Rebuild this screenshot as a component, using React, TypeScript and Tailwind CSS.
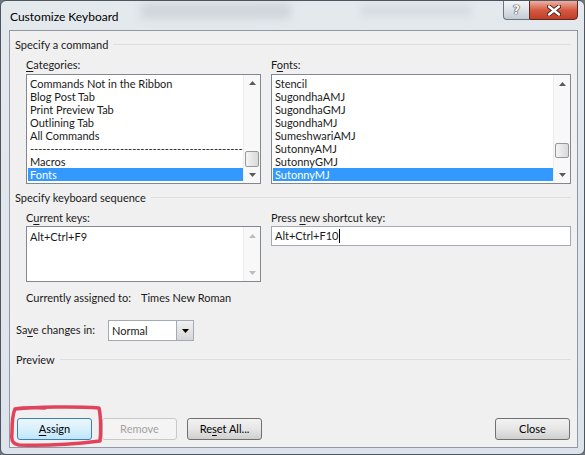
import React from 'react';

const CATEGORIES = [
  'Commands Not in the Ribbon',
  'Blog Post Tab',
  'Print Preview Tab',
  'Outlining Tab',
  'All Commands',
  '-------------------------------------------------------',
  'Macros',
  'Fonts',
];

const FONTS = [
  'Stencil',
  'SugondhaAMJ',
  'SugondhaGMJ',
  'SugondhaMJ',
  'SumeshwariAMJ',
  'SutonnyAMJ',
  'SutonnyGMJ',
  'SutonnyMJ',
];

function Tri({ dir, color }: { dir: 'up' | 'down'; color: string }) {
  return (
    <svg width="7" height="4" viewBox="0 0 7 4">
      <path d={dir === 'up' ? 'M0 4 L3.5 0 L7 4 Z' : 'M0 0 L7 0 L3.5 4 Z'} fill={color} />
    </svg>
  );
}

function ScrollBar({ thumb, disabled }: { thumb?: string; disabled?: boolean }) {
  const c = disabled ? '#bcbcbc' : '#5a5a5a';
  return (
    <div className="w-[17px] shrink-0 flex flex-col bg-[#f8f8f8] border-l border-[#ededed]">
      <div className="h-[17px] flex items-center justify-center">
        <Tri dir="up" color={c} />
      </div>
      <div className="flex-1">
        {thumb && (
          <div
            className={`${thumb} mx-[1px] rounded-[2px] border border-[#979797] bg-gradient-to-r from-[#f4f4f4] to-[#d9d9d9]`}
          />
        )}
      </div>
      <div className="h-[17px] flex items-center justify-center">
        <Tri dir="down" color={c} />
      </div>
    </div>
  );
}

function ListBox({ items, width, thumb }: { items: string[]; width: string; thumb: string }) {
  return (
    <div className={`${width} h-[110px] flex border border-[#828790] bg-white`}>
      <ul className="flex-1 min-w-0 pt-[2px] pl-[1px]">
        {items.map((t, i) => (
          <li
            key={i}
            className={`h-[13px] leading-[13px] pl-[2px] whitespace-nowrap ${
              i === items.length - 1 ? 'bg-[#3399ff] text-white' : ''
            }`}
          >
            {t}
          </li>
        ))}
      </ul>
      <ScrollBar thumb={thumb} />
    </div>
  );
}

function GroupHeader({ title, className = '' }: { title: string; className?: string }) {
  return (
    <div className={`h-[15px] leading-[15px] flex items-center ${className}`}>
      <span>{title}</span>
      <div className="flex-1 ml-[5px] mr-[1px] border-t border-[#dadfe3]" />
    </div>
  );
}

function WinButton({
  children,
  variant = 'normal',
  className = '',
}: {
  children: React.ReactNode;
  variant?: 'normal' | 'default' | 'disabled';
  className?: string;
}) {
  const styles = {
    normal: 'border-[#707070] bg-gradient-to-b from-[#f2f2f2] via-[#e6e6e6] to-[#cfcfcf] text-black',
    default: 'border-[#3c7fb1] bg-gradient-to-b from-[#eaf6fd] via-[#d9f0fc] to-[#bee6fd] text-black',
    disabled: 'border-[#c9c9c9] bg-[#f4f4f4] text-[#a3a3a3]',
  }[variant];
  return (
    <button
      className={`w-[75px] h-[22px] rounded-[3px] border flex items-center justify-center ${styles} ${className}`}
    >
      {children}
    </button>
  );
}

export default function App() {
  return (
    <div className="w-[585px] h-[455px] bg-[#6f757c] font-['Segoe_UI','Lato',sans-serif] text-[11px] text-[#1a1a1a]">
      <div className="relative h-full flex flex-col rounded-[6px] border border-[#4c5560] bg-gradient-to-b from-[#e4e9ee] to-[#dde3ea] pl-[8px] pr-[6px] pb-[6px] overflow-hidden">
        {/* blurred glass behind title bar */}
        <div className="absolute left-[140px] top-[2px] w-[150px] h-[16px] rounded-[3px] bg-[#c9ced4] blur-[4px] opacity-70" />
        <div className="absolute left-[360px] top-[5px] w-[110px] h-[10px] bg-[#cfd4da] blur-[4px] opacity-70" />

        {/* Title bar */}
        <div className="relative h-[29px] flex items-start">
          <span className="mt-[7px] ml-[1px] text-[12px] text-black">Customize Keyboard</span>
          <div className="ml-auto -mt-px flex">
            <div className="w-[26px] h-[20px] rounded-bl-[4px] border border-[#6d7680] border-r-0 bg-gradient-to-b from-[#f3f5f7] via-[#dde2e7] to-[#c4cbd3] flex items-center justify-center">
              <span className="font-['DejaVu_Sans',sans-serif] font-bold text-[12px] text-white [text-shadow:0_0_1px_#333,0_0_1px_#333,0_0_1px_#333]">
                ?
              </span>
            </div>
            <div className="w-[49px] h-[20px] rounded-br-[4px] border border-[#5a2b25] bg-gradient-to-b from-[#eab0a3] via-[#d45a41] to-[#c03d25] flex items-center justify-center">
              <svg width="14" height="11" viewBox="0 0 14 11">
                <path d="M2 1.5 L12 9.5 M12 1.5 L2 9.5" stroke="#4a1e18" strokeWidth="4.2" strokeLinecap="round" />
                <path d="M2 1.5 L12 9.5 M12 1.5 L2 9.5" stroke="#ffffff" strokeWidth="2.4" strokeLinecap="round" />
              </svg>
            </div>
          </div>
        </div>

        {/* Client area */}
        <div className="flex-1 flex flex-col border border-[#8f98a3] bg-[#f0f0f0] px-[5px] pt-[6px] pb-[7px]">
          <GroupHeader title="Specify a command" />

          <div className="flex mt-[5px] ml-[11px]">
            <div className="w-[245px] h-[15px] leading-[15px]">
              <span className="underline underline-offset-2">C</span>ategories:
            </div>
            <div className="h-[15px] leading-[15px]">
              F<span className="underline underline-offset-2">o</span>nts:
            </div>
          </div>
          <div className="flex mt-[2px] ml-[11px]">
            <ListBox items={CATEGORIES} width="w-[235px]" thumb="mt-[59px] h-[16px]" />
            <div className="w-[10px]" />
            <ListBox items={FONTS} width="w-[300px]" thumb="mt-[51px] h-[15px]" />
          </div>

          <GroupHeader title="Specify keyboard sequence" className="mt-[6px]" />

          <div className="flex mt-[5px] ml-[11px]">
            <div className="w-[245px] h-[15px] leading-[15px]">
              C<span className="underline underline-offset-2">u</span>rrent keys:
            </div>
            <div className="h-[15px] leading-[15px]">
              Press <span className="underline underline-offset-2">n</span>ew shortcut key:
            </div>
          </div>
          <div className="flex items-start mt-[1px] ml-[11px]">
            <div className="w-[235px] h-[56px] flex border border-[#828790] bg-white">
              <div className="flex-1 pt-[3px] pl-[3px] leading-[13px]">Alt+Ctrl+F9</div>
              <ScrollBar disabled />
            </div>
            <div className="w-[10px]" />
            <div className="w-[300px] h-[20px] flex items-center border border-[#a3aab3] bg-white pl-[3px]">
              <span>Alt+Ctrl+F10</span>
              <span className="w-px h-[14px] bg-black ml-px" />
            </div>
          </div>

          <div className="flex mt-[8px] ml-[11px] h-[15px] leading-[15px]">
            <span className="w-[115px]">Currently assigned to:</span>
            <span>Times New Roman</span>
          </div>

          <div className="flex items-center mt-[15px] ml-[1px]">
            <span className="w-[92px]">
              Sa<span className="underline underline-offset-2">v</span>e changes in:
            </span>
            <div className="w-[86px] h-[21px] flex border border-[#a3aab3] bg-white">
              <span className="flex-1 pl-[3px] leading-[19px]">Normal</span>
              <div className="w-[17px] h-full flex items-center justify-center border-l border-[#a3aab3] bg-gradient-to-b from-[#f2f2f2] to-[#d6d6d6]">
                <Tri dir="down" color="#000" />
              </div>
            </div>
          </div>

          <GroupHeader title="Preview" className="mt-[11px] ml-[1px]" />

          <div className="flex-1" />

          <div className="flex ml-[2px] mr-[2px]">
            <WinButton variant="default">
              <span>
                <span className="underline underline-offset-2">A</span>ssign
              </span>
            </WinButton>
            <WinButton variant="disabled" className="ml-[10px] w-[74px]">
              Remove
            </WinButton>
            <WinButton className="ml-[10px] w-[74px]">
              <span>
                Re<span className="underline underline-offset-2">s</span>et All...
              </span>
            </WinButton>
            <WinButton className="ml-auto w-[74px]">Close</WinButton>
          </div>
        </div>

        {/* red hand-drawn annotation */}
        <svg className="absolute left-[4px] top-[402px]" width="100" height="48" viewBox="0 0 100 48">
          <path
            d="M10 6 C30 4 70 3 94 5 C96 14 96 30 95 38 C70 41 35 43 14 42 C8 41 6 38 7 30 C7 20 7 12 10 6 C20 4 30 5 40 5"
            fill="none"
            stroke="#e2435c"
            strokeWidth="3.5"
            strokeLinecap="round"
            strokeLinejoin="round"
          />
        </svg>
      </div>
    </div>
  );
}
